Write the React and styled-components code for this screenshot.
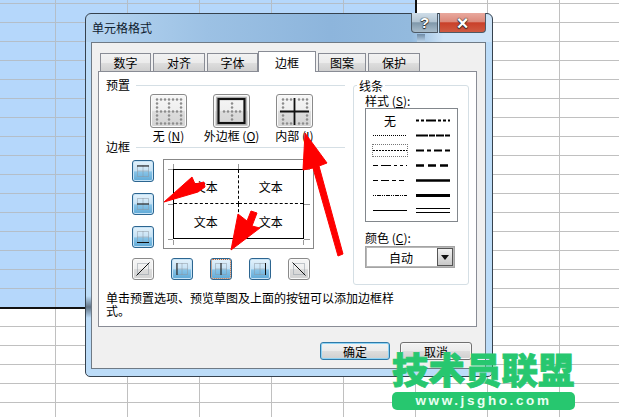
import React from 'react';
import styled, { createGlobalStyle } from 'styled-components';

const Global = createGlobalStyle`
  html, body { margin: 0; padding: 0; background: #fff; }
  body { font-family: "Noto Sans CJK SC", "Liberation Sans", sans-serif; font-size: 12px; color: #000; }
`;

const gridLines = (c) => `
  background-image: linear-gradient(${c} 1px, transparent 1px), linear-gradient(90deg, ${c} 1px, transparent 1px);
  background-size: 72px 19px;
  background-position: 55px 3px;
`;

const Sheet = styled.div`
  position: relative;
  width: 619px;
  height: 417px;
  overflow: hidden;
  background-color: #fff;
  ${gridLines('#c0c0c0')}
`;

const Selection = styled.div`
  position: absolute;
  left: 0;
  top: 0;
  width: 415px;
  height: 307px;
  background-color: #b5d7fb;
  ${gridLines('#b4bec8')}
  border-right: 2px solid #111;
  border-bottom: 2px solid #111;
`;

const Dialog = styled.div`
  position: absolute;
  z-index: 1;
  left: 85px;
  top: 13px;
  width: 408px;
  box-sizing: border-box;
  border: 1px solid #36424e;
  border-radius: 6px 6px 5px 5px;
  padding: 0 6px 7px 5px;
  background:
    linear-gradient(to bottom, transparent 282px, #5f7184 293px, transparent 304px) left top / 5px 100% no-repeat,
    linear-gradient(to bottom, #6f8ba6, #c6dff5) 331px 20px / 8px 9px no-repeat,
    linear-gradient(90deg, #b6d5f1 0, #9cc1e4 30%, #8db5dc 60%, #93bade 80%, #cde3f7 88%, #cde3f7 100%) top / 100% 28px no-repeat,
    #bcdcf8;
`;

const TitleBar = styled.div`
  display: flex;
  align-items: flex-start;
  justify-content: space-between;
  height: 28px;
`;

const TitleText = styled.span`
  margin: 6px 0 0 1px;
  line-height: 16px;
  font-size: 12px;
  color: #10202e;
`;

const Caption = styled.div`
  display: flex;
  margin-top: -1px;
  gap: 1px;
`;

const CaptionButton = styled.div`
  display: flex;
  align-items: center;
  justify-content: center;
  box-sizing: border-box;
  width: ${(p) => (p.$close ? 47 : 27)}px;
  height: 20px;
  border: 1px solid #4d5a66;
  border-top: none;
  border-radius: ${(p) => (p.$close ? '0 0 4px 0' : '0 0 0 4px')};
  background: ${(p) =>
    p.$close
      ? 'linear-gradient(#e9a99e 0, #dc8a7c 45%, #c9402a 52%, #cf5a42 100%)'
      : 'linear-gradient(#cfdde8 0, #b4c6d4 45%, #7f98ab 52%, #a8bccb 100%)'};
  color: #fff;
  font: bold ${(p) => (p.$close ? 20 : 15)}px/18px "Liberation Sans", sans-serif;
  text-shadow: 0 0 1px #222, 0 0 1px #222, 0 1px 1px #222;
`;

const Client = styled.div`
  border: 1px solid #6f7a85;
  padding: 8px 8px 8px 6px;
  background: #f0f0f0;
`;

const Tabs = styled.div`
  display: flex;
  align-items: flex-end;
  gap: 2px;
  height: 21px;
  margin-left: 2px;
`;

const Tab = styled.div`
  position: relative;
  z-index: ${(p) => (p.$active ? 2 : 0)};
  box-sizing: border-box;
  display: flex;
  align-items: center;
  justify-content: center;
  width: ${(p) => p.$w}px;
  height: ${(p) => (p.$active ? 21 : 19)}px;
  margin-left: ${(p) => (p.$active ? -2 : 0)}px;
  border: 1px solid #898c95;
  border-bottom: ${(p) => (p.$active ? 'none' : '1px solid #898c95')};
  background: ${(p) => (p.$active ? '#fff' : 'linear-gradient(#f2f2f2 0, #ebebeb 50%, #dddddd 55%, #cfcfcf 100%)')};
`;

const Pane = styled.div`
  position: relative;
  z-index: 1;
  box-sizing: border-box;
  width: 379px;
  height: 256px;
  margin-top: -1px;
  border: 1px solid #898c95;
  background: #fff;
  padding: 6px 7px 0;
`;

const PaneGrid = styled.div`
  display: grid;
  grid-template-columns: 239px 116px;
  column-gap: 8px;
  height: 207px;
`;

const LeftColumn = styled.div`
  display: flex;
  flex-direction: column;
`;

const SectionHead = styled.div`
  display: flex;
  align-items: center;
  gap: 6px;
  height: 14px;
  line-height: 14px;
  &::after {
    content: '';
    flex: 1;
    height: 1px;
    background: #d5dfe5;
  }
`;

const PresetRow = styled.div`
  display: flex;
  height: 46px;
  margin: 2px 0 0 31px;
`;

const PresetItem = styled.div`
  display: flex;
  flex-direction: column;
  align-items: center;
  width: 63px;
`;

const PresetButton = styled.div`
  box-sizing: border-box;
  width: 37px;
  height: 34px;
  border: 1px solid #8a8a8a;
  border-radius: 3px;
  box-shadow: inset 0 0 0 1px #fafafa;
  background: linear-gradient(#f6f6f6 0, #efefef 48%, #dcdcdc 52%, #d4d4d4 100%);
  & > svg { display: block; }
`;

const PresetLabel = styled.div`
  height: 14px;
  line-height: 14px;
  margin-top: 1px;
  white-space: nowrap;
`;

const Editor = styled.div`
  display: flex;
  gap: 9px;
  margin: 5px 0 0 26px;
`;

const SideButtons = styled.div`
  display: flex;
  flex-direction: column;
  gap: 11px;
  padding-top: 1px;
`;

const GlyphButton = styled.div`
  position: relative;
  box-sizing: border-box;
  width: 22px;
  height: 22px;
  border: 1px solid ${(p) => (p.$on ? '#2c6590' : '#8a8a8a')};
  border-radius: 3px;
  box-shadow: inset 0 0 0 1px ${(p) => (p.$on ? '#c6e3f6' : '#fafafa')};
  background: ${(p) =>
    p.$on
      ? 'linear-gradient(#e4f2fb 0, #c6e2f5 48%, #88c4e8 55%, #5fa9d6 100%)'
      : 'linear-gradient(#f6f6f6 0, #efefef 48%, #dcdcdc 52%, #d2d2d2 100%)'};
  outline: ${(p) => (p.$focus ? '1px dotted #c4622d' : 'none')};
  outline-offset: -2px;
  & > svg { display: block; }
`;

const Preview = styled.div`
  position: relative;
  box-sizing: border-box;
  width: 151px;
  height: 90px;
  border: 1px solid #888;
  background: #fff;
  padding: 9px;
`;

const Ticks = styled.svg`
  position: absolute;
  left: 0;
  top: 0;
`;

const PreviewTable = styled.div`
  position: relative;
  display: grid;
  grid-template-columns: 1fr 1fr;
  grid-template-rows: 1fr 1fr;
  box-sizing: border-box;
  width: 131px;
  height: 70px;
  border: 1px solid #000;
`;

const PreviewCell = styled.div`
  display: flex;
  align-items: center;
  justify-content: center;
  border-right: ${(p) => (p.$right ? '1px dashed #000' : 'none')};
  border-bottom: ${(p) => (p.$bottom ? '1px dashed #000' : 'none')};
`;

const BottomButtons = styled.div`
  display: flex;
  gap: 17px;
  margin: 9px 0 0 26px;
`;

const LineGroup = styled.div`
  box-sizing: border-box;
  height: 200px;
  margin-top: 7px;
  border: 1px solid #d5dfe5;
  border-radius: 3px;
  padding: 0 0 0 11px;
`;

const Legend = styled.div`
  width: fit-content;
  height: 14px;
  line-height: 14px;
  margin: -7px 0 1px -8px;
  padding: 0 2px;
  background: #fff;
`;

const FieldLabel = styled.div`
  height: 14px;
  line-height: 14px;
  margin-top: ${(p) => p.$mt || 0}px;
  white-space: nowrap;
`;

const LineList = styled.div`
  display: grid;
  grid-template-columns: 43px 43px;
  grid-auto-rows: 15px;
  justify-content: start;
  box-sizing: border-box;
  width: 93px;
  height: 114px;
  border: 1px solid #82878c;
  padding: 4px 0 0 5px;
`;

const LineCell = styled.div`
  position: relative;
  display: flex;
  align-items: center;
  justify-content: center;
  width: 38px;
  height: 15px;
  & > svg { display: block; }
  outline: ${(p) => (p.$sel ? '1px dotted #777' : 'none')};
  outline-offset: -2px;
`;

const Combo = styled.div`
  display: flex;
  box-sizing: border-box;
  width: 90px;
  height: 22px;
  margin-top: 1px;
  border: 1px solid #a4a4a4;
  box-shadow: inset 0 0 0 1px #b8b8b8;
  background: #fff;
`;

const ComboValue = styled.div`
  flex: 1;
  display: flex;
  align-items: center;
  justify-content: center;
`;

const ComboArrow = styled.div`
  box-sizing: border-box;
  display: flex;
  align-items: center;
  justify-content: center;
  width: 16px;
  border: 1px solid #555;
  margin: 1px;
  background: linear-gradient(#f2f2f2, #c8c8c8);
  &::after {
    content: '';
    border: 4px solid transparent;
    border-top: 5px solid #111;
    border-bottom: none;
  }
`;

const Hint = styled.div`
  width: 292px;
  margin-top: 6px;
  line-height: 13px;
`;

const Footer = styled.div`
  display: flex;
  justify-content: flex-end;
  gap: 10px;
  margin-top: 15px;
  padding-right: 5px;
`;

const DialogButton = styled.div`
  box-sizing: border-box;
  display: flex;
  align-items: center;
  justify-content: center;
  width: ${(p) => (p.$primary ? 70 : 72)}px;
  height: 18px;
  border: 1px solid ${(p) => (p.$primary ? '#2f7aa8' : '#707070')};
  border-radius: 3px;
  box-shadow: ${(p) => (p.$primary ? 'inset 0 0 0 1px #8fd3f4' : 'inset 0 0 0 1px #f8f8f8')};
  background: linear-gradient(#f3f3f3 0, #ebebeb 48%, #dddddd 52%, #cfcfcf 100%);
`;

const Arrows = styled.svg`
  position: absolute;
  z-index: 2;
  left: 0;
  top: 0;
`;

const Watermark = styled.div`
  position: absolute;
  z-index: 3;
  left: 392px;
  top: 345px;
  width: 183px;
`;

const WatermarkTitle = styled.div`
  height: 47px;
  line-height: 47px;
  font-size: 36.5px;
  font-weight: 900;
  white-space: nowrap;
  color: #27c76f;
  -webkit-text-stroke: 0.8px #27c76f;
`;

const WatermarkUrl = styled.div`
  height: 18px;
  border-radius: 5px;
  background: #27c76f;
  color: #e9fff2;
  text-align: center;
  font: bold 13.5px/17px "Liberation Sans", sans-serif;
  letter-spacing: 2.6px;
`;

const dotsFor = (keep) => {
  const out = [];
  for (let r = 0; r < 7; r++) {
    for (let c = 0; c < 7; c++) {
      if (keep(r, c)) out.push(<circle key={`${r}-${c}`} cx={6 + c * 4} cy={4.5 + r * 4} r="1.25" fill="#8c8c8c" />);
    }
  }
  return out;
};

const isLine = (i) => i === 0 || i === 3 || i === 6;

function PresetIcon({ kind }) {
  if (kind === 'none') {
    return <svg width="35" height="32">{dotsFor((r, c) => isLine(r) || isLine(c))}</svg>;
  }
  if (kind === 'outline') {
    return (
      <svg width="35" height="32">
        {dotsFor((r, c) => r > 0 && r < 6 && c > 0 && c < 6 && (r === 3 || c === 3))}
        <rect x="4" y="3.5" width="27" height="25" fill="none" stroke="#aaa" strokeWidth="3.6" />
        <rect x="4.5" y="4" width="26" height="24" fill="none" stroke="#111" strokeWidth="2" />
      </svg>
    );
  }
  return (
    <svg width="35" height="32">
      {dotsFor((r, c) => (r === 0 || r === 6 || c === 0 || c === 6) && r !== 3 && c !== 3)}
      <path d="M3 16.5H32M17.5 3V30" stroke="#111" strokeWidth="1.8" fill="none" />
    </svg>
  );
}

const SOLID = {
  top: 'M4 5H16',
  middle: 'M4 10H16',
  bottom: 'M4 15.5H16',
  left: 'M5 4V16',
  center: 'M10 4V16',
  right: 'M15.5 4V16',
  diagUp: 'M3.5 16.5L16.5 3.5',
  diagDown: 'M3.5 3.5L16.5 16.5',
};

function Glyph({ kind }) {
  const diag = kind.startsWith('diag');
  return (
    <svg width="20" height="20">
      <rect x="4.5" y="4.5" width="11" height="11" fill="none" stroke="#8c96a0" strokeDasharray="1 1" />
      {!diag && <path d="M10 4.5V15.5M4.5 10H15.5" stroke="#8c96a0" strokeDasharray="1 1" fill="none" />}
      <path d={SOLID[kind]} stroke="#111" strokeWidth="1" fill="none" />
    </svg>
  );
}

const LINES_LEFT = [
  { sel: false, text: '无' },
  { dash: '1 1', w: 1 },
  { dash: '2 1', w: 1, sel: true },
  { dash: '5 3 10 3 3 3 3 3', w: 1 },
  { dash: '5 3 8 3 4 3', w: 1 },
  { dash: '1 1 1 1 4 1', w: 1 },
  { w: 1 },
];
const LINES_RIGHT = [
  { dash: '3 2 3 2 10 2 3 2', w: 2 },
  { dash: '12 1 6 1 8 1', w: 2 },
  { dash: '8 3 4 3 8 3', w: 2 },
  { dash: '8 4', w: 2.5 },
  { w: 2.5 },
  { w: 3 },
  { dbl: true },
];

function Stroke({ w, dash, dbl }) {
  return (
    <svg width="34" height="7">
      {dbl ? (
        <path d="M0 1.5H34M0 5.5H34" stroke="#000" strokeWidth="1" />
      ) : (
        <path d="M0 3.5H34" stroke="#000" strokeWidth={w} strokeDasharray={dash} />
      )}
    </svg>
  );
}

const TABS = [
  ['数字', 51], ['对齐', 52], ['字体', 51], ['边框', 58, true], ['图案', 48], ['保护', 52],
];

export default function App() {
  return (
    <Sheet>
      <Global />
      <Selection />
      <Dialog>
        <TitleBar>
          <TitleText>单元格格式</TitleText>
          <Caption>
            <CaptionButton>?</CaptionButton>
            <CaptionButton $close>×</CaptionButton>
          </Caption>
        </TitleBar>
        <Client>
          <Tabs>
            {TABS.map(([t, w, a]) => (
              <Tab key={t} $w={w} $active={a}>{t}</Tab>
            ))}
          </Tabs>
          <Pane>
            <PaneGrid>
              <LeftColumn>
                <SectionHead>预置</SectionHead>
                <PresetRow>
                  <PresetItem>
                    <PresetButton><PresetIcon kind="none" /></PresetButton>
                    <PresetLabel>无 (<u>N</u>)</PresetLabel>
                  </PresetItem>
                  <PresetItem>
                    <PresetButton><PresetIcon kind="outline" /></PresetButton>
                    <PresetLabel>外边框 (<u>O</u>)</PresetLabel>
                  </PresetItem>
                  <PresetItem>
                    <PresetButton><PresetIcon kind="inside" /></PresetButton>
                    <PresetLabel>内部 (<u>I</u>)</PresetLabel>
                  </PresetItem>
                </PresetRow>
                <SectionHead>边框</SectionHead>
                <Editor>
                  <SideButtons>
                    <GlyphButton $on><Glyph kind="top" /></GlyphButton>
                    <GlyphButton $on><Glyph kind="middle" /></GlyphButton>
                    <GlyphButton $on><Glyph kind="bottom" /></GlyphButton>
                  </SideButtons>
                  <Preview>
                    <Ticks width="149" height="88">
                      <path
                        d="M4 9.5H9M140 9.5H146M4 44.5H9M140 44.5H146M4 79.5H9M140 79.5H146M9.5 4V9M74.5 4V9M139.5 4V9M9.5 80V85M74.5 80V85M139.5 80V85"
                        stroke="#999"
                        fill="none"
                      />
                    </Ticks>
                    <PreviewTable>
                      <PreviewCell $right $bottom>文本</PreviewCell>
                      <PreviewCell $bottom>文本</PreviewCell>
                      <PreviewCell $right>文本</PreviewCell>
                      <PreviewCell>文本</PreviewCell>
                    </PreviewTable>
                  </Preview>
                </Editor>
                <BottomButtons>
                  <GlyphButton><Glyph kind="diagUp" /></GlyphButton>
                  <GlyphButton $on><Glyph kind="left" /></GlyphButton>
                  <GlyphButton $on $focus><Glyph kind="center" /></GlyphButton>
                  <GlyphButton $on><Glyph kind="right" /></GlyphButton>
                  <GlyphButton><Glyph kind="diagDown" /></GlyphButton>
                </BottomButtons>
              </LeftColumn>
              <LineGroup>
                <Legend>线条</Legend>
                <FieldLabel>样式 (<u>S</u>):</FieldLabel>
                <LineList>
                  {LINES_LEFT.map((l, i) => (
                    <React.Fragment key={i}>
                      <LineCell $sel={l.sel}>{l.text || <Stroke {...l} />}</LineCell>
                      <LineCell><Stroke {...LINES_RIGHT[i]} /></LineCell>
                    </React.Fragment>
                  ))}
                </LineList>
                <FieldLabel $mt={9}>颜色 (<u>C</u>):</FieldLabel>
                <Combo>
                  <ComboValue>自动</ComboValue>
                  <ComboArrow />
                </Combo>
              </LineGroup>
            </PaneGrid>
            <Hint>单击预置选项、预览草图及上面的按钮可以添加边框样式。</Hint>
          </Pane>
          <Footer>
            <DialogButton $primary>确定</DialogButton>
            <DialogButton>取消</DialogButton>
          </Footer>
        </Client>
      </Dialog>
      <Arrows width="619" height="417">
        <g fill="#fe0000" stroke="#fe0000" strokeWidth="1" strokeLinejoin="round">
          <path d="M305 133L327 163L319 166L343 254L338 256L313 168L303 170Z" />
          <path d="M164 202L192 177L195 184L204 182L205 187L198 192Z" />
          <path d="M231 250L238 214L247 221L251 211L257 213L252 226L260 228Z" />
        </g>
      </Arrows>
      <Watermark>
        <WatermarkTitle>技术员联盟</WatermarkTitle>
        <WatermarkUrl>www.jsgho.com</WatermarkUrl>
      </Watermark>
    </Sheet>
  );
}
